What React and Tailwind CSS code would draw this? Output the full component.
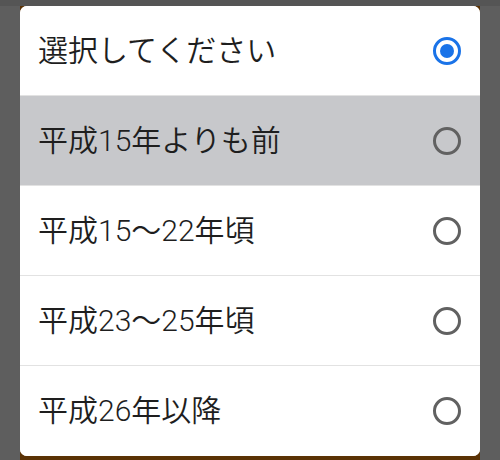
import React from "react";

const items = [
  { label: "選択してください", checked: true },
  { label: "平成15年よりも前", highlight: true },
  { label: "平成15〜22年頃" },
  { label: "平成23〜25年頃" },
  { label: "平成26年以降" },
];

function Radio({ checked }) {
  return (
    <svg width="30" height="30" viewBox="0 0 30 30">
      <circle
        cx="15"
        cy="15"
        r="12.5"
        fill="none"
        stroke={checked ? "#1a73e8" : "#616161"}
        strokeWidth="3"
      />
      {checked && <circle cx="15" cy="15" r="7" fill="#1a73e8" />}
    </svg>
  );
}

export default function App() {
  return (
    <div className="w-[500px] h-[460px] bg-[#5e5e5e] flex flex-col overflow-hidden">
      <div className="h-[6px] bg-[#555555] shrink-0" />
      <div className="flex flex-1">
        <div className="w-[20px]" />
        <div className="w-[460px] flex flex-col bg-[#5a3205]">
          <div
            className="bg-white rounded-[7px] overflow-hidden flex flex-col"
            style={{ fontFamily: 'Roboto, "Noto Sans CJK JP", "Noto Sans", sans-serif' }}
          >
            {items.map((it, i) => (
              <div
                key={i}
                className={`h-[90px] flex items-center justify-between pl-[18px] pr-[18px] ${
                  i < items.length - 1 ? "border-b border-[#e2e2e2]" : ""
                } ${it.highlight ? "bg-[#c7c8cb]" : "bg-white"}`}
              >
                <span className="text-[30px] font-[350] text-[#1e1e1e] leading-none">
                  {it.label}
                </span>
                <Radio checked={it.checked} />
              </div>
            ))}
          </div>
        </div>
        <div className="w-[20px]" />
      </div>
    </div>
  );
}
